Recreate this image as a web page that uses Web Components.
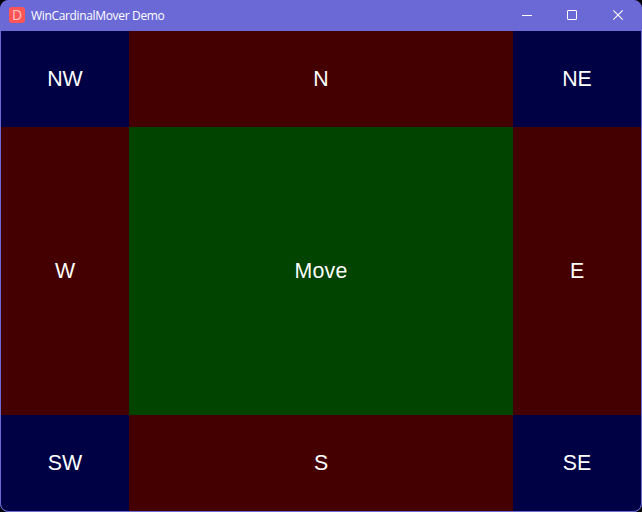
<!DOCTYPE html>
<html lang="en">
<head>
<meta charset="utf-8">
<title>WinCardinalMover Demo</title>
<style>
html, body { margin: 0; height: 100%; background: #000; overflow: hidden; }
</style>
</head>
<body>
<app-window>
  <title-bar slot="title">WinCardinalMover Demo</title-bar>
  <mover-grid>
    <mover-zone kind="corner">NW</mover-zone>
    <mover-zone kind="edge">N</mover-zone>
    <mover-zone kind="corner">NE</mover-zone>
    <mover-zone kind="edge">W</mover-zone>
    <mover-zone kind="center">Move</mover-zone>
    <mover-zone kind="edge">E</mover-zone>
    <mover-zone kind="corner">SW</mover-zone>
    <mover-zone kind="edge">S</mover-zone>
    <mover-zone kind="corner">SE</mover-zone>
  </mover-grid>
</app-window>
<script>
function define(name, markup) {
  customElements.define(name, class extends HTMLElement {
    constructor() {
      super();
      this.attachShadow({ mode: "open" }).innerHTML = markup;
    }
  });
}

define("app-window", `
<style>
  :host { display: flex; flex-direction: column; box-sizing: border-box; width: 642px; height: 512px;
    border: 1px solid #6b69d6; border-radius: 8px; overflow: hidden; background: #6b69d6; }
  .body { flex: 1; min-height: 0; display: grid; border-radius: 0 0 7px 7px; overflow: hidden; }
</style>
<slot name="title"></slot>
<div class="body"><slot></slot></div>`);

define("app-icon", `
<style>
  :host { display: block; width: 16px; height: 16px; box-sizing: border-box; border-radius: 3px;
    background: #ff5555; color: #ffc4c4; font: 500 14px/16px "Open Sans", "Noto Sans", sans-serif; text-align: center; }
</style><slot></slot>`);

define("title-bar", `
<style>
  :host { display: flex; align-items: center; height: 30px; flex: none; background: #6b69d6; color: #fff;
    font: 12px/16px "Open Sans", "Noto Sans", sans-serif; }
  app-icon { margin: 0 6px 2px 8px; }
  .name { flex: 1; white-space: nowrap; font-weight: 500; letter-spacing: -0.34px; }
  svg { display: block; fill: none; stroke: #fff; }
</style>
<app-icon>D</app-icon>
<div class="name"><slot></slot></div>
<svg width="137" height="30" viewBox="504 1 137 30" role="img" aria-label="Window controls">
  <path d="M522 15.5h10"/>
  <rect x="567.5" y="10.5" width="9" height="9" rx="0.5"/>
  <path d="M613.3 10.3l9.4 9.4M622.7 10.3l-9.4 9.4" stroke-width="1.1"/>
</svg>`);

define("mover-grid", `
<style>
  :host { display: grid; grid-template-columns: 128px 384px 128px; grid-template-rows: 96px 288px 96px; }
</style><slot></slot>`);

define("mover-zone", `
<style>
  :host { display: flex; align-items: center; justify-content: center; color: #fff;
    font: 21.333px/24px "Liberation Sans", Arial, sans-serif; }
  :host([kind="corner"]) { background: #000044; }
  :host([kind="edge"]) { background: #440000; }
  :host([kind="center"]) { background: #004400; letter-spacing: 0.2px; }
</style><slot></slot>`);
</script>
</body>
</html>
